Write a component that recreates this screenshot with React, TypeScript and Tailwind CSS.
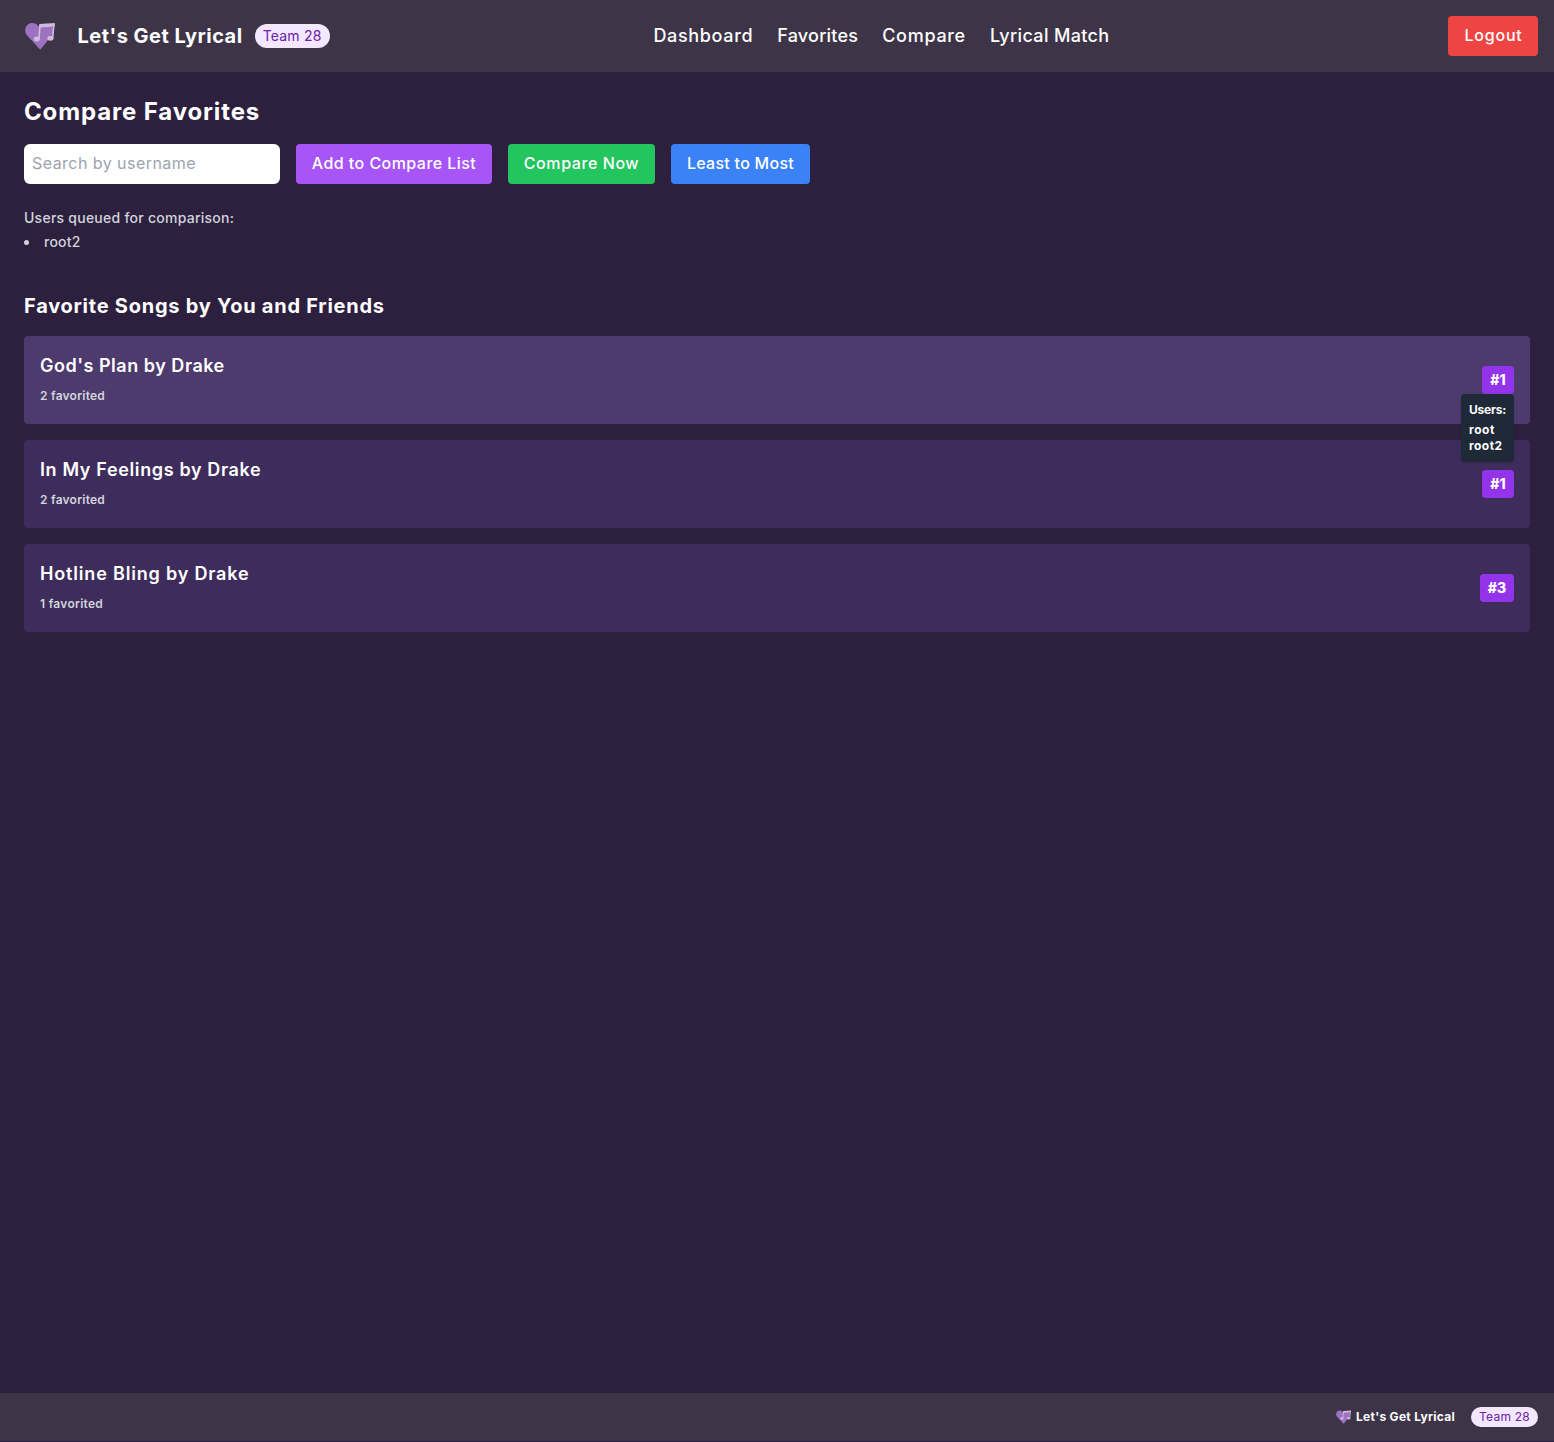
function Logo({ className }: { className: string }) {
  return (
    <svg className={className} viewBox="0 0 30 28" fill="none" aria-hidden="true">
      <path
        d="M15.3 27.7 2.2 13.6C-.6 10.4-.4 5.6 2.4 3c3-2.8 7.6-2.5 10.3.4L15 5.6l2-2.4C19 1.6 23 1.2 25.8 3c2.8 2 3.2 7.4.8 10.6L15.3 27.7Z"
        fill="#9c72c1"
      />
      <path
        d="M28.9 1.8 27.6 16.6M15.1 2.2 13.9 17.2"
        stroke="#d1bbdc"
        strokeWidth="1.7"
      />
      <path d="M14.5 1.9 29.9.9l-.3 3.7-15.3 1 .2-3.7Z" fill="#d1bbdc" />
      <ellipse cx="11.8" cy="17.1" rx="3" ry="2.5" fill="#d1bbdc" />
      <ellipse cx="25.4" cy="16.3" rx="3" ry="2.5" fill="#d1bbdc" />
    </svg>
  );
}

const navLinks = [
  { label: "Dashboard", tracking: "tracking-[0.66px]" },
  { label: "Favorites", tracking: "tracking-[0.22px]" },
  { label: "Compare", tracking: "tracking-[0.7px]" },
  { label: "Lyrical Match", tracking: "tracking-[0.36px]" },
];

const songs = [
  {
    title: "God's Plan by Drake",
    titleClass: "tracking-[0.52px]",
    count: "2 favorited",
    countClass: "tracking-[0.23px]",
    rank: "#1",
    rankClass: "w-8",
    active: true,
  },
  {
    title: "In My Feelings by Drake",
    titleClass: "tracking-[0.64px]",
    count: "2 favorited",
    countClass: "tracking-[0.23px]",
    rank: "#1",
    rankClass: "w-8",
    active: false,
  },
  {
    title: "Hotline Bling by Drake",
    titleClass: "tracking-[0.82px]",
    count: "1 favorited",
    countClass: "tracking-[0.27px]",
    rank: "#3",
    rankClass: "w-[34px]",
    active: false,
  },
];

export default function App() {
  return (
    <div className="min-h-[1442px] bg-[#2d203f] pb-px font-['Inter',sans-serif] text-white">
      <div className="flex min-h-[1441px] flex-col">
        <header className="flex h-[72px] items-center justify-between bg-[#3d3547] px-4">
          <div className="flex w-[299px] items-center whitespace-nowrap">
            <Logo className="ml-[9px] h-7 w-[30px] shrink-0" />
            <span className="ml-[22.5px] text-xl font-bold tracking-[0.49px]">Let's Get Lyrical</span>
            <span className="ml-3 flex h-6 w-[75px] shrink-0 items-center justify-center rounded-full bg-purple-100 text-sm tracking-[0.21px] text-[#6b21a8]">
              Team 28
            </span>
          </div>
          <nav className="flex gap-6 text-lg font-[450]">
            {navLinks.map((link) => (
              <a key={link.label} className={link.tracking}>
                {link.label}
              </a>
            ))}
          </nav>
          <button className="h-10 w-[90px] rounded bg-[#ef4444] pb-0.5 pl-px font-[450] tracking-[0.8px]">
            Logout
          </button>
        </header>

        <main className="flex-1 p-6">
          <h1 className="mb-4 text-2xl font-bold tracking-[0.86px]">Compare Favorites</h1>
          <div className="mb-6 flex gap-4 font-[450]">
            <input
              className="h-10 w-64 rounded-md bg-white px-2 pt-2 pb-2.5 font-normal tracking-[0.45px] text-black placeholder:text-[#9ca3af]"
              placeholder="Search by username"
            />
            <button className="h-10 w-[196px] rounded bg-[#a855f7] pb-0.5 tracking-[0.45px]">
              Add to Compare List
            </button>
            <button className="h-10 w-[147px] rounded bg-[#22c55e] pb-0.5 tracking-[0.58px]">
              Compare Now
            </button>
            <button className="h-10 w-[139px] rounded bg-[#3b82f6] pb-0.5 tracking-[0.27px]">
              Least to Most
            </button>
          </div>

          <section className="mb-10 text-sm font-[450] text-[#d1d5db]">
            <p className="tracking-[0.25px]">Users queued for comparison:</p>
            <ul className="mt-1">
              <li className="flex items-center tracking-[0.24px]">
                <span className="mr-[15px] size-[5px] rounded-full bg-[#d1d5db]" />
                root2
              </li>
            </ul>
          </section>

          <h2 className="mb-4 text-xl font-bold tracking-[0.75px]">
            Favorite Songs by You and Friends
          </h2>
          <ul className="flex flex-col gap-4">
            {songs.map((song) => (
              <li
                key={song.title}
                className={`flex h-[88px] items-center justify-between rounded px-4 ${
                  song.active ? "bg-[#4d3b6e]" : "bg-[#3e2d5c]"
                }`}
              >
                <div className="self-start pt-4">
                  <p className={`text-lg font-semibold ${song.titleClass}`}>{song.title}</p>
                  <p className={`mt-2 text-xs font-semibold text-[#d1d5db] ${song.countClass}`}>
                    {song.count}
                  </p>
                </div>
                <div className="relative">
                  <span
                    className={`flex h-7 items-center justify-center rounded bg-[#9333ea] text-sm font-extrabold ${song.rankClass}`}
                  >
                    {song.rank}
                  </span>
                  {song.active && (
                    <div className="absolute top-full right-0 z-10 w-[53px] rounded bg-[#1f2937] p-2 text-xs font-bold whitespace-nowrap shadow-sm">
                      <p className="mb-1 tracking-[-0.2px]">Users:</p>
                      <p className="tracking-[0.58px]">root</p>
                      <p className="tracking-[0.45px]">root2</p>
                    </div>
                  )}
                </div>
              </li>
            ))}
          </ul>
        </main>

        <footer className="flex h-12 items-center justify-end bg-[#3d3547] px-4 text-xs">
          <Logo className="h-[14px] w-[15px]" />
          <span className="ml-[5px] font-bold tracking-[0.29px]">Let's Get Lyrical</span>
          <span className="ml-4 flex h-5 w-[67px] items-center justify-center rounded-full bg-purple-100 tracking-[0.25px] text-[#6b21a8]">
            Team 28
          </span>
        </footer>
      </div>
    </div>
  );
}
